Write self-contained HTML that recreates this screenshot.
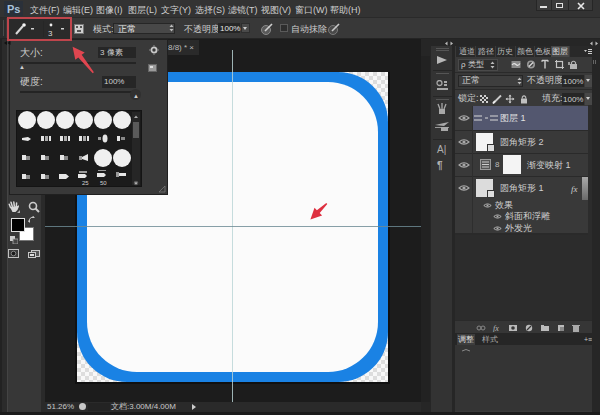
<!DOCTYPE html>
<html><head><meta charset="utf-8">
<style>
*{margin:0;padding:0;box-sizing:border-box}
html,body{width:600px;height:415px;overflow:hidden;background:#1c1c1c;font-family:"Liberation Sans",sans-serif;color:#d6d6d6;position:relative}
.a{position:absolute}
.t{position:absolute;font-size:9px;line-height:10px;white-space:nowrap;color:#cfcfcf}
.w{background:#f4f4f4}
.c{position:absolute;width:18px;height:18px;border-radius:50%;background:#f0f0f0}
.bi{position:absolute;background:#d8d8d8}
</style></head><body>
<!-- menu bar -->
<div class="a" style="left:0;top:0;width:600px;height:17px;background:#333333"></div>
<div class="a" style="left:536px;top:0;width:57px;height:11px;background:#3a3a3a;border:1px solid #262626;border-top:0"></div>
<div class="a" style="left:551px;top:0;width:1px;height:11px;background:#262626"></div>
<div class="a" style="left:568px;top:0;width:1px;height:11px;background:#262626"></div>
<div class="a" style="left:540px;top:6px;width:7px;height:2px;background:#e0e0e0"></div>
<div class="a" style="left:556px;top:3px;width:7px;height:5px;border:1.5px solid #e0e0e0"></div>
<svg class="a" style="left:577px;top:2px" width="8" height="8"><path d="M1 1 L7 7 M7 1 L1 7" stroke="#e8e8e8" stroke-width="1.6"/></svg>
<div class="a" style="left:0;top:17px;width:600px;height:1px;background:#2a2a2a"></div>
<div class="a" style="left:4px;top:1px;width:19px;height:15px;background:#2a3039"></div>
<div class="t" style="left:7px;top:3px;font-size:11px;line-height:12px;font-weight:bold;color:#a9c2dc">Ps</div>
<div class="t" style="left:30px;top:5px">文件(F)</div>
<div class="t" style="left:63px;top:5px">编辑(E)</div>
<div class="t" style="left:96px;top:5px">图像(I)</div>
<div class="t" style="left:128px;top:5px">图层(L)</div>
<div class="t" style="left:161px;top:5px">文字(Y)</div>
<div class="t" style="left:195px;top:5px">选择(S)</div>
<div class="t" style="left:228px;top:5px">滤镜(T)</div>
<div class="t" style="left:261px;top:5px">视图(V)</div>
<div class="t" style="left:295px;top:5px">窗口(W)</div>
<div class="t" style="left:330px;top:5px">帮助(H)</div>

<!-- options bar -->
<div class="a" style="left:0;top:18px;width:600px;height:20px;background:#383838"></div>
<div class="a" style="left:0;top:38px;width:600px;height:1px;background:#242424"></div>
<div class="a" style="left:0;top:18px;width:6px;height:20px;background:#2c2c2c"></div>
<div class="a" style="left:3px;top:20px;width:1px;height:16px;background:#4a4a4a"></div>
<!-- brush panel toggle -->
<svg class="a" style="left:74px;top:24px" width="10" height="10"><rect x="0.5" y="0.5" width="9" height="9" fill="#d0d0d0" stroke="#777"/><rect x="2" y="2" width="2" height="2" fill="#555"/><rect x="6" y="2" width="2" height="2" fill="#555"/><rect x="3" y="6" width="4" height="2" fill="#555"/></svg>
<div class="t" style="left:93px;top:24px">模式:</div>
<div class="a" style="left:113px;top:23px;width:62px;height:11px;background:#484848;border:1px solid #262626"></div>
<div class="t" style="left:118px;top:24px;color:#e8e8e8">正常</div>
<svg class="a" style="left:169px;top:24px" width="5" height="8"><path d="M0.5 3 L2.5 0.5 L4.5 3 Z M0.5 5 L2.5 7.5 L4.5 5 Z" fill="#bbb"/></svg>
<div class="t" style="left:184px;top:24px">不透明度:</div>
<div class="a" style="left:218px;top:23px;width:22px;height:10px;background:#262626"></div>
<div class="t" style="left:220px;top:24px;font-size:8px;color:#e6e6e6">100%</div>
<div class="a" style="left:241px;top:23px;width:9px;height:10px;background:#4a4a4a;border:1px solid #2e2e2e"></div>
<svg class="a" style="left:243px;top:27px" width="5" height="4"><path d="M0 0 L4 0 L2 3 Z" fill="#ccc"/></svg>
<svg class="a" style="left:260px;top:22px" width="14" height="14"><circle cx="6" cy="8" r="4.5" fill="#5a5a5a" stroke="#8a8a8a" stroke-width="1"/><line x1="5" y1="9" x2="12" y2="2" stroke="#d0d0d0" stroke-width="1.6"/></svg>
<div class="a" style="left:280px;top:24px;width:8px;height:8px;border:1px solid #5a5a5a;background:#2e2e2e"></div>
<div class="t" style="left:291px;top:24px">自动抹除</div>
<svg class="a" style="left:327px;top:22px" width="14" height="14"><circle cx="6" cy="8" r="4.5" fill="#4a4a4a" stroke="#7a7a7a" stroke-width="1"/><line x1="5" y1="9" x2="12" y2="2" stroke="#c8c8c8" stroke-width="1.6"/></svg>

<!-- canvas area -->
<div class="a" style="left:45px;top:39px;width:376px;height:363px;background:#1c1c1c"></div>
<div class="a" style="left:167px;top:40px;width:32px;height:15px;background:#2a2a2a"></div>
<div class="t" style="left:168px;top:43px;font-size:8px;color:#bbb">8/8) * ×</div>
<!-- image -->
<svg class="a" style="left:77px;top:72px" width="311" height="310">
<defs><pattern id="ck" width="8" height="8" patternUnits="userSpaceOnUse"><rect width="8" height="8" fill="#f8f8f8"/><rect width="4" height="4" fill="#dddddd"/><rect x="4" y="4" width="4" height="4" fill="#dddddd"/></pattern></defs>
<rect width="311" height="310" fill="url(#ck)"/>
<rect x="0" y="0" width="311" height="310" rx="50" fill="#1a82e4"/>
<rect x="10" y="10" width="291" height="290" rx="50" fill="#fbfbfb"/>
</svg>
<div class="a" style="left:388px;top:72px;width:2px;height:312px;background:#101010"></div>
<div class="a" style="left:75px;top:72px;width:2px;height:312px;background:#121212"></div>
<div class="a" style="left:75px;top:382px;width:315px;height:2px;background:#101010"></div>
<!-- guides -->
<div class="a" style="left:232px;top:50px;width:1px;height:352px;background:rgba(185,212,214,0.82)"></div>
<div class="a" style="left:45px;top:226px;width:376px;height:1px;background:rgba(108,138,148,0.82)"></div>
<!-- status bar -->
<div class="a" style="left:45px;top:402px;width:376px;height:10px;background:#2a2a2a"></div>
<div class="a" style="left:421px;top:402px;width:9px;height:10px;background:#2e2e2e"></div>
<div class="a" style="left:0;top:412px;width:600px;height:3px;background:#1b1b1b"></div>
<div class="t" style="left:47px;top:402px;font-size:8px;color:#c8c8c8">51.26%</div>
<div class="a" style="left:79px;top:403px;width:7px;height:7px;border-radius:50%;background:#c8c8c8"></div>
<div class="a" style="left:88px;top:403px;width:22px;height:8px;background:#232323"></div>
<div class="t" style="left:111px;top:402px;font-size:8px;color:#c8c8c8">文档:3.00M/4.00M</div>
<svg class="a" style="left:192px;top:404px" width="5" height="6"><path d="M0 0 L4 3 L0 6 Z" fill="#ccc"/></svg>

<!-- left toolbar -->
<div class="a" style="left:0;top:39px;width:45px;height:373px;background:#373737"></div>
<div class="a" style="left:0;top:39px;width:2px;height:373px;background:#222"></div>
<div class="a" style="left:2px;top:39px;width:5px;height:373px;background:#2b2b2b"></div>
<div class="a" style="left:7px;top:39px;width:1px;height:373px;background:#444"></div>
<div class="a" style="left:41px;top:39px;width:4px;height:373px;background:#2a2a2a"></div>
<!-- tools -->
<svg class="a" style="left:8px;top:201px" width="12" height="12"><path d="M2.5 6.5 L1.2 3.2 M4.3 5.5 L3 1.3 M6.3 5.2 L5.8 1 M8.3 5.5 L8.6 2" stroke="#d8d8d8" stroke-width="1.5" stroke-linecap="round"/><path d="M2 6 L9.5 5 L10.5 4 L11 5.5 L9.5 9 L7.5 11 L4.5 11 Z" fill="#d8d8d8"/></svg>
<svg class="a" style="left:17px;top:210px" width="4" height="4"><path d="M3 0 L3 3 L0 3Z" fill="#aaa"/></svg>
<svg class="a" style="left:28px;top:201px" width="12" height="12"><circle cx="5" cy="5" r="3.5" fill="none" stroke="#ccc" stroke-width="1.6"/><line x1="7.5" y1="7.5" x2="11" y2="11" stroke="#ccc" stroke-width="2"/></svg>
<div class="a" style="left:19px;top:227px;width:15px;height:14px;background:#fff;border:1px solid #777"></div>
<div class="a" style="left:11px;top:218px;width:14px;height:14px;background:#000;border:1px solid #ddd"></div>
<svg class="a" style="left:28px;top:216px" width="8" height="8"><path d="M1 6 Q1 1 6 1" fill="none" stroke="#ccc" stroke-width="1"/><path d="M0 5 L2 7 L2 4Z M5 0 L7 2 L4 2Z" fill="#ccc"/></svg>
<svg class="a" style="left:10px;top:236px" width="8" height="8"><rect x="0" y="0" width="5" height="5" fill="#ccc"/><rect x="3" y="3" width="5" height="5" fill="#444" stroke="#aaa" stroke-width="0.8"/></svg>
<svg class="a" style="left:8px;top:249px" width="32" height="11">
<rect x="0.5" y="0.5" width="10" height="8" fill="#3a3a3a" stroke="#c0c0c0"/><circle cx="5.5" cy="4.5" r="2.3" fill="#1a1a1a" stroke="#999" stroke-width="0.8"/>
<rect x="23.5" y="1.5" width="8" height="6" fill="#555" stroke="#c8c8c8"/><rect x="20.5" y="3.5" width="7" height="5" fill="#3a3a3a" stroke="#c8c8c8"/><rect x="22" y="5" width="4" height="2" fill="#ddd"/>
</svg>

<!-- brush popup -->
<div class="a" style="left:9px;top:39px;width:159px;height:156px;background:#393939;border:1px solid #202020"></div>
<div class="t" style="left:20px;top:48px;font-size:10px">大小:</div>
<div class="a" style="left:98px;top:47px;width:38px;height:11px;background:#262626"></div>
<div class="t" style="left:100px;top:48px;font-size:8px">3 像素</div>
<svg class="a" style="left:149px;top:45px" width="11" height="10"><circle cx="5" cy="5" r="2.6" fill="none" stroke="#c8c8c8" stroke-width="1.8"/><g fill="#888"><circle cx="5" cy="0.8" r="0.7"/><circle cx="5" cy="9.2" r="0.7"/><circle cx="9.2" cy="5" r="0.7"/><circle cx="0.8" cy="5" r="0.7"/></g></svg>
<div class="a" style="left:20px;top:62px;width:116px;height:2px;background:#242424"></div>
<div class="t" style="left:19px;top:64px;font-size:6px;line-height:6px">▲</div>
<svg class="a" style="left:148px;top:64px" width="9" height="8"><rect x="0.5" y="0.5" width="8" height="7" fill="#9a9a9a" stroke="#666"/><rect x="2" y="2" width="3" height="2" fill="#ddd"/></svg>
<div class="t" style="left:20px;top:77px;font-size:10px">硬度:</div>
<div class="a" style="left:102px;top:76px;width:34px;height:12px;background:#262626"></div>
<div class="t" style="left:104px;top:77px;font-size:8px">100%</div>
<div class="a" style="left:20px;top:91px;width:116px;height:2px;background:#242424"></div>
<div class="a" style="left:130px;top:89px;width:11px;height:11px;border-radius:50%;background:#303030"></div>
<div class="t" style="left:133px;top:93px;font-size:6px;line-height:6px">▲</div>
<!-- brush grid -->
<div class="a" style="left:16px;top:110px;width:126px;height:77px;background:#1b1b1b;border:1px solid #141414"></div>
<div class="c" style="left:18px;top:111px"></div>
<div class="c" style="left:37px;top:111px"></div>
<div class="c" style="left:56px;top:111px"></div>
<div class="c" style="left:75px;top:111px"></div>
<div class="c" style="left:94px;top:111px"></div>
<div class="c" style="left:113px;top:111px"></div>
<div class="c" style="left:94px;top:149px"></div>
<div class="c" style="left:113px;top:149px"></div>
<!-- small brush icons -->
<svg class="a" style="left:16px;top:130px" width="116" height="58">
<g fill="#e6e6e6">
<path d="M6 8 L12 7 L15 9 L12 11 L6 10 Z"/>
<rect x="25" y="6" width="3" height="5"/><rect x="29" y="6" width="3" height="5" fill="#aaa"/><rect x="33" y="6" width="2" height="5"/>
<rect x="44" y="6" width="3" height="5"/><rect x="48" y="6" width="3" height="5" fill="#aaa"/><rect x="52" y="6" width="2" height="5"/>
<rect x="63" y="6" width="3" height="5"/><rect x="67" y="6" width="3" height="5" fill="#aaa"/><rect x="71" y="6" width="2" height="5"/>
<rect x="82" y="7" width="3" height="3" fill="#999"/><ellipse cx="89" cy="8.5" rx="2.5" ry="4"/>
<rect x="101" y="6" width="3" height="5"/><rect x="105" y="7" width="4" height="3" fill="#888"/>
<rect x="6" y="25" width="4" height="5"/><rect x="10" y="26" width="4" height="4" fill="#888"/>
<rect x="25" y="25" width="4" height="5"/><rect x="29" y="26" width="4" height="4" fill="#888"/>
<rect x="44" y="25" width="4" height="5"/><rect x="48" y="26" width="4" height="4" fill="#888"/>
<rect x="63" y="26" width="3" height="4" fill="#999"/><path d="M66 27 L72 24 L72 31 L66 29 Z"/>
<rect x="6" y="44" width="4" height="5"/><rect x="10" y="45" width="4" height="4" fill="#888"/>
<rect x="25" y="44" width="4" height="5"/><rect x="29" y="45" width="4" height="4" fill="#888"/>
<path d="M43 44 L50 44 L53 46.5 L50 49 L43 49 Z"/>
<rect x="63" y="41" width="8" height="2" fill="#999"/><path d="M62 44 L69 44 L71 46 L69 48 L62 48 Z"/>
<rect x="82" y="40" width="8" height="1" fill="#999"/><path d="M81 43 L88 43 L90 45 L88 47 L81 47 Z"/>
<rect x="100" y="42" width="3" height="5" fill="#999"/><rect x="103" y="43" width="7" height="3"/>
</g>
</svg>
<div class="t" style="left:82px;top:180px;font-size:6px;line-height:6px">25</div>
<div class="t" style="left:100px;top:180px;font-size:6px;line-height:6px">50</div>
<!-- scrollbar -->
<div class="a" style="left:132px;top:112px;width:8px;height:73px;background:#262626"></div>
<div class="a" style="left:133px;top:122px;width:6px;height:16px;background:#5a5a5a"></div>
<svg class="a" style="left:133px;top:114px" width="6" height="72"><path d="M1 4 L3 1.5 L5 4 Z" fill="#aaa"/><circle cx="3" cy="69" r="2.3" fill="#555"/><path d="M1.5 68.5 L4.5 68.5 L3 70.5 Z" fill="#ccc"/></svg>
<svg class="a" style="left:159px;top:186px" width="7" height="7"><path d="M6 0 L6 6 L0 6 Z" fill="none" stroke="#777" stroke-width="0.8"/></svg>

<svg class="a" style="left:4px;top:41px" width="7" height="4"><path d="M0 2 L3 0 L3 4 Z M3.5 2 L6.5 0 L6.5 4 Z" fill="#111"/></svg>
<!-- red highlight box -->
<div class="a" style="left:9px;top:19px;width:61px;height:20px;background:#2a2a2a"></div>
<div class="a" style="left:7px;top:17px;width:65px;height:24px;border:2px solid #bf454c"></div>
<svg class="a" style="left:9px;top:19px" width="61" height="20">
<line x1="7" y1="15" x2="14" y2="7" stroke="#d8d8d8" stroke-width="2"/>
<circle cx="15" cy="6" r="1.8" fill="#f4f4f4"/>
<rect x="22" y="9" width="3" height="1.5" fill="#cfcfcf"/>
<rect x="34" y="2" width="1" height="16" fill="#262626"/>
<circle cx="42" cy="6" r="1.4" fill="#eee"/>
<text x="39" y="17" font-size="8" fill="#ddd" font-family="Liberation Sans">3</text>
<rect x="52" y="9" width="3" height="1.5" fill="#cfcfcf"/>
</svg>
<!-- arrows -->
<svg class="a" style="left:0;top:0" width="600" height="415">
<polygon points="72.6,46.7 84.7,52.4 81.7,54.7 93.9,72.3 92.7,73.3 78.3,57.5 75.3,59.8" fill="#e04650"/>
<polygon points="310.4,219.4 322.1,215.6 319.7,213.1 327.3,204.0 326.3,203.0 316.9,210.3 314.5,207.8" fill="#de3040"/>
</svg>
<!-- right panels -->
<div class="a" style="left:421px;top:39px;width:179px;height:373px;background:#262626"></div>
<div class="a" style="left:421px;top:56px;width:9px;height:346px;background:#222"></div>
<svg class="a" style="left:445px;top:41px" width="8" height="5"><path d="M0 2.5 L2.5 0.5 L2.5 4.5 Z M8 2.5 L5.5 0.5 L5.5 4.5 Z" fill="#bbb"/></svg>
<!-- icon column -->
<div class="a" style="left:431px;top:46px;width:21px;height:366px;background:#333333"></div>
<div class="a" style="left:436px;top:48px;width:13px;height:1px;background:#555"></div>
<div class="a" style="left:436px;top:50px;width:13px;height:1px;background:#555"></div>
<svg class="a" style="left:437px;top:56px" width="11" height="9"><polygon points="0,0 10,4 0,8" fill="#b8b8b8"/></svg>
<div class="a" style="left:433px;top:70px;width:19px;height:1px;background:#262626"></div>
<div class="a" style="left:436px;top:73px;width:13px;height:1px;background:#555"></div>
<svg class="a" style="left:436px;top:80px" width="14" height="11"><circle cx="3.5" cy="3" r="2.5" fill="none" stroke="#a8a8a8" stroke-width="1.3"/><rect x="8" y="1" width="3" height="2" fill="#a8a8a8"/><rect x="8" y="4" width="3" height="2" fill="#a8a8a8"/><rect x="1" y="8" width="11" height="2" fill="#a8a8a8"/></svg>
<div class="a" style="left:433px;top:96px;width:19px;height:1px;background:#262626"></div>
<div class="a" style="left:436px;top:99px;width:13px;height:1px;background:#555"></div>
<svg class="a" style="left:435px;top:103px" width="14" height="12"><path d="M3 1 L5 6 M7 0 L7 6 M11 1 L9 6" stroke="#a8a8a8" stroke-width="1.3"/><rect x="4" y="6" width="6" height="5" fill="#a8a8a8"/></svg>
<svg class="a" style="left:434px;top:120px" width="16" height="12"><path d="M1 5 L10 3 L15 2 L10 6 Z" fill="#a8a8a8"/><rect x="1" y="7" width="14" height="1" fill="#999"/><rect x="7" y="7" width="7" height="4" fill="#a8a8a8"/></svg>
<div class="a" style="left:433px;top:139px;width:19px;height:1px;background:#262626"></div>
<div class="t" style="left:437px;top:144px;font-size:10px;line-height:11px;color:#b0b0b0">A|</div>
<div class="t" style="left:437px;top:160px;font-size:10px;line-height:11px;font-weight:bold;color:#b0b0b0">¶</div>
<div class="a" style="left:452px;top:46px;width:3px;height:366px;background:#262626"></div>

<!-- layers panel -->
<div class="a" style="left:455px;top:46px;width:137px;height:366px;background:#393939"></div>
<div class="a" style="left:455px;top:46px;width:137px;height:11px;background:#3a3a3a"></div>
<div class="a" style="left:456px;top:46px;width:19px;height:11px;background:#292929"></div>
<div class="a" style="left:476px;top:46px;width:19px;height:11px;background:#292929"></div>
<div class="a" style="left:496px;top:46px;width:19px;height:11px;background:#292929"></div>
<div class="a" style="left:516px;top:46px;width:18px;height:11px;background:#292929"></div>
<div class="a" style="left:535px;top:46px;width:16px;height:11px;background:#292929"></div>
<div class="a" style="left:551px;top:46px;width:18px;height:11px;background:#474747"></div>
<div class="a" style="left:570px;top:46px;width:22px;height:11px;background:#292929"></div>
<div class="t" style="left:459px;top:47px;font-size:8px;color:#bbb">通道</div>
<div class="t" style="left:478px;top:47px;font-size:8px;color:#bbb">路径</div>
<div class="t" style="left:497px;top:47px;font-size:8px;color:#bbb">历史</div>
<div class="t" style="left:517px;top:47px;font-size:8px;color:#bbb">颜色</div>
<div class="t" style="left:535px;top:47px;font-size:8px;color:#bbb">色板</div>
<div class="t" style="left:552px;top:47px;font-size:8px;color:#ddd">图层</div>
<svg class="a" style="left:584px;top:48px" width="8" height="7"><path d="M0 2 L3 2 L1.5 4 Z" fill="#ccc"/><rect x="4" y="1" width="4" height="1" fill="#ccc"/><rect x="4" y="3" width="4" height="1" fill="#ccc"/><rect x="4" y="5" width="4" height="1" fill="#ccc"/></svg>
<!-- filter row -->
<div class="a" style="left:458px;top:59px;width:40px;height:12px;background:#2e2e2e;border:1px solid #4a4a4a"></div>
<div class="t" style="left:461px;top:60px;font-size:8px">ρ 类型</div>
<svg class="a" style="left:490px;top:61px" width="5" height="8"><path d="M0.5 3 L2.5 0.5 L4.5 3 Z M0.5 5 L2.5 7.5 L4.5 5 Z" fill="#bbb"/></svg>
<svg class="a" style="left:511px;top:59px" width="70" height="11">
<rect x="0.5" y="2" width="9" height="7" fill="#8a8a8a"/><path d="M1 6 Q3 3.5 5 5.5 T9 4.5" stroke="#e0e0e0" stroke-width="1.2" fill="none"/>
<circle cx="20" cy="5.5" r="4" fill="#999"/><circle cx="20" cy="5.5" r="2.4" fill="#444"/><path d="M18 7.5 L22 3.5" stroke="#ddd" stroke-width="1.3"/>
<path d="M31 1.5 L37 1.5 M34 1.5 L34 9.5" stroke="#ccc" stroke-width="1.4"/><path d="M31 1 L31 3 M37 1 L37 3" stroke="#ccc" stroke-width="1"/>
<rect x="45.5" y="2.5" width="6" height="6" fill="none" stroke="#c4c4c4" stroke-width="1.2"/><path d="M44 2.5 L45.5 2.5 M51.5 8.5 L53 8.5 M45.5 1 L45.5 2.5 M51.5 8.5 L51.5 10" stroke="#c4c4c4"/>
<rect x="59" y="5" width="7" height="5" fill="#b4b4b4"/><path d="M60.5 5 L60.5 3.5 Q62.5 1 64.5 3.5 L64.5 5" stroke="#b4b4b4" fill="none" stroke-width="1.2"/><rect x="57" y="3" width="2" height="3" fill="#999"/>
</svg>
<div class="a" style="left:455px;top:72px;width:137px;height:1px;background:#2a2a2a"></div>
<!-- blend row -->
<div class="a" style="left:458px;top:75px;width:65px;height:12px;background:#3e3e3e;border:1px solid #262626"></div>
<div class="t" style="left:462px;top:75px;font-size:9px">正常</div>
<svg class="a" style="left:517px;top:77px" width="5" height="8"><path d="M0.5 3 L2.5 0.5 L4.5 3 Z M0.5 5 L2.5 7.5 L4.5 5 Z" fill="#bbb"/></svg>
<div class="t" style="left:527px;top:75px;font-size:9px">不透明度:</div>
<div class="a" style="left:562px;top:75px;width:22px;height:12px;background:#262626"></div>
<div class="t" style="left:563px;top:77px;font-size:8px">100%</div>
<div class="a" style="left:585px;top:75px;width:7px;height:12px;background:#474747"></div>
<svg class="a" style="left:586px;top:79px" width="5" height="4"><path d="M0 0 L4 0 L2 3 Z" fill="#ccc"/></svg>
<div class="a" style="left:455px;top:89px;width:137px;height:1px;background:#2a2a2a"></div>
<!-- lock row -->
<div class="t" style="left:458px;top:93px;font-size:9px">锁定:</div>
<svg class="a" style="left:480px;top:94px" width="50" height="10">
<g fill="#d0d0d0"><rect x="0" y="1" width="2" height="2"/><rect x="4" y="1" width="2" height="2"/><rect x="2" y="3" width="2" height="2"/><rect x="6" y="3" width="2" height="2"/><rect x="0" y="5" width="2" height="2"/><rect x="4" y="5" width="2" height="2"/><rect x="2" y="7" width="2" height="2"/><rect x="6" y="7" width="2" height="2"/></g>
<path d="M14 8.5 L21 1.5" stroke="#ccc" stroke-width="1.8"/><path d="M13 9.5 L15 7" stroke="#eee" stroke-width="2"/>
<path d="M30 1 L30 9 M26 5 L34 5" stroke="#c8c8c8" stroke-width="1.2"/><path d="M28.5 2.5 L30 0.5 L31.5 2.5 Z M28.5 7.5 L30 9.5 L31.5 7.5 Z M27.5 3.5 L25.5 5 L27.5 6.5 Z M32.5 3.5 L34.5 5 L32.5 6.5Z" fill="#c8c8c8"/>
<rect x="41" y="4.5" width="6" height="5" fill="#c0c0c0"/><path d="M42.3 4.5 L42.3 3 Q44 0.8 45.7 3 L45.7 4.5" stroke="#c0c0c0" fill="none" stroke-width="1.1"/>
</svg>
<div class="t" style="left:542px;top:93px;font-size:9px">填充:</div>
<div class="a" style="left:562px;top:93px;width:22px;height:12px;background:#262626"></div>
<div class="t" style="left:563px;top:95px;font-size:8px">100%</div>
<div class="a" style="left:585px;top:93px;width:7px;height:12px;background:#474747"></div>
<svg class="a" style="left:586px;top:97px" width="5" height="4"><path d="M0 0 L4 0 L2 3 Z" fill="#ccc"/></svg>
<!-- layers list -->
<div class="a" style="left:455px;top:105px;width:133px;height:128px;background:#393939"></div>
<div class="a" style="left:472px;top:106px;width:116px;height:24px;background:#53576f"></div>
<div class="a" style="left:455px;top:130px;width:133px;height:1px;background:#2a2a2a"></div>
<div class="a" style="left:455px;top:153px;width:133px;height:1px;background:#2a2a2a"></div>
<div class="a" style="left:455px;top:176px;width:133px;height:1px;background:#2a2a2a"></div>
<div class="a" style="left:455px;top:233px;width:137px;height:2px;background:#2a2a2a"></div>
<div class="a" style="left:472px;top:106px;width:1px;height:127px;background:#2e2e2e"></div>
<!-- eyes -->
<svg class="a" style="left:458px;top:113px" width="12" height="10"><path d="M1 5 Q6 0.5 11 5 Q6 9.5 1 5 Z" fill="none" stroke="#a8a8a8" stroke-width="1.1"/><circle cx="6" cy="5" r="1.6" fill="#a8a8a8"/></svg>
<svg class="a" style="left:458px;top:137px" width="12" height="10"><path d="M1 5 Q6 0.5 11 5 Q6 9.5 1 5 Z" fill="none" stroke="#a8a8a8" stroke-width="1.1"/><circle cx="6" cy="5" r="1.6" fill="#a8a8a8"/></svg>
<svg class="a" style="left:458px;top:160px" width="12" height="10"><path d="M1 5 Q6 0.5 11 5 Q6 9.5 1 5 Z" fill="none" stroke="#a8a8a8" stroke-width="1.1"/><circle cx="6" cy="5" r="1.6" fill="#a8a8a8"/></svg>
<svg class="a" style="left:458px;top:183px" width="12" height="10"><path d="M1 5 Q6 0.5 11 5 Q6 9.5 1 5 Z" fill="none" stroke="#a8a8a8" stroke-width="1.1"/><circle cx="6" cy="5" r="1.6" fill="#a8a8a8"/></svg>
<!-- layer 1 -->
<svg class="a" style="left:473px;top:113px" width="26" height="10"><g stroke="#d8d8d8" stroke-width="1.2" fill="none"><path d="M1 3 L9 3 M1 7 L9 7 M12 5 L15 5 M17 3 L25 3 M17 7 L25 7"/></g></svg>
<div class="t" style="left:500px;top:113px;font-size:9px;color:#e0e0e0">图层 1</div>
<!-- layer 2 -->
<div class="a w" style="left:476px;top:133px;width:17px;height:18px"></div>
<div class="a" style="left:487px;top:144px;width:8px;height:8px;border:1px solid #333;background:#ddd"></div>
<div class="t" style="left:500px;top:137px;font-size:9px">圆角矩形 2</div>
<!-- layer 3 -->
<svg class="a" style="left:480px;top:159px" width="11" height="11"><rect x="0.5" y="0.5" width="10" height="10" fill="#555" stroke="#999"/><path d="M2 3 L9 3 M2 5.5 L9 5.5 M2 8 L9 8" stroke="#ccc" stroke-width="1"/></svg>
<div class="t" style="left:495px;top:160px;font-size:8px;color:#bbb">8</div>
<div class="a w" style="left:503px;top:155px;width:18px;height:19px"></div>
<div class="t" style="left:527px;top:160px;font-size:9px">渐变映射 1</div>
<!-- layer 4 -->
<div class="a" style="left:476px;top:179px;width:17px;height:18px;background:#dcdcdc"></div>
<div class="a" style="left:487px;top:190px;width:8px;height:8px;border:1px solid #333;background:#ddd"></div>
<div class="t" style="left:500px;top:183px;font-size:9px">圆角矩形 1</div>
<div class="t" style="left:571px;top:184px;font-size:9px;font-style:italic;font-family:'Liberation Serif',serif">fx</div>
<div class="a" style="left:582px;top:177px;width:8px;height:23px;background:linear-gradient(#a8a8a8,#6a6a6a)"></div>
<!-- effects -->
<svg class="a" style="left:483px;top:202px" width="9" height="7"><path d="M0.8 3.5 Q4.5 0.3 8.2 3.5 Q4.5 6.7 0.8 3.5 Z" fill="none" stroke="#b0b0b0" stroke-width="1"/><circle cx="4.5" cy="3.5" r="1" fill="#b0b0b0"/></svg>
<div class="t" style="left:495px;top:200px;font-size:9px">效果</div>
<svg class="a" style="left:493px;top:213px" width="9" height="7"><path d="M0.8 3.5 Q4.5 0.3 8.2 3.5 Q4.5 6.7 0.8 3.5 Z" fill="none" stroke="#b0b0b0" stroke-width="1"/><circle cx="4.5" cy="3.5" r="1" fill="#b0b0b0"/></svg>
<div class="t" style="left:505px;top:211px;font-size:9px">斜面和浮雕</div>
<svg class="a" style="left:493px;top:225px" width="9" height="7"><path d="M0.8 3.5 Q4.5 0.3 8.2 3.5 Q4.5 6.7 0.8 3.5 Z" fill="none" stroke="#b0b0b0" stroke-width="1"/><circle cx="4.5" cy="3.5" r="1" fill="#b0b0b0"/></svg>
<div class="t" style="left:505px;top:223px;font-size:9px">外发光</div>
<!-- empty region -->
<div class="a" style="left:455px;top:235px;width:133px;height:85px;background:#2c2c2c"></div>
<div class="a" style="left:588px;top:105px;width:4px;height:218px;background:#2c2c2c"></div>
<!-- bottom toolbar -->
<div class="a" style="left:455px;top:320px;width:137px;height:13px;background:#363636;border-top:1px solid #2a2a2a"></div>
<svg class="a" style="left:475px;top:324px" width="110" height="8">
<path d="M2 4 a2 2 0 0 1 4 0 M6 4 a2 2 0 0 0 4 0 M6 4 a2 2 0 0 1 4 0 M2 4 a2 2 0 0 0 4 0" stroke="#888" fill="none" stroke-width="1"/>
<text x="18" y="7" font-size="8" font-style="italic" fill="#bbb" font-family="Liberation Serif">fx</text>
<rect x="34" y="1" width="8" height="6" fill="#bbb"/><circle cx="38" cy="4" r="1.8" fill="#363636"/>
<circle cx="54" cy="4" r="3.2" fill="#bbb"/><path d="M52 6 L56 2" stroke="#363636" stroke-width="1.2"/>
<rect x="66" y="2" width="8" height="5" fill="#bbb"/><rect x="66" y="1" width="3" height="2" fill="#bbb"/>
<rect x="83" y="1" width="6" height="6" fill="#bbb"/><rect x="85" y="3" width="4" height="4" fill="#888"/>
<rect x="98" y="2" width="6" height="6" fill="#aaa"/><rect x="97" y="1" width="8" height="1" fill="#aaa"/>
</svg>
<!-- adjustments -->
<div class="a" style="left:455px;top:333px;width:137px;height:12px;background:#262626"></div>
<div class="a" style="left:457px;top:334px;width:18px;height:11px;background:#3d3d3d"></div>
<div class="t" style="left:458px;top:335px;font-size:8px;color:#ddd">调整</div>
<div class="t" style="left:482px;top:335px;font-size:8px;color:#aaa">样式</div>
<div class="t" style="left:584px;top:335px;font-size:7px;color:#ccc">+≡</div>
<div class="a" style="left:455px;top:345px;width:137px;height:66px;background:#343434"></div>
<svg class="a" style="left:462px;top:348px" width="8" height="4"><path d="M0 3 Q4 0 8 3" stroke="#888" fill="none"/></svg>
<div class="a" style="left:592px;top:39px;width:8px;height:373px;background:#262626"></div>
<svg class="a" style="left:590px;top:41px" width="8" height="5"><path d="M0 2.5 L2.5 0.5 L2.5 4.5 Z M8 2.5 L5.5 0.5 L5.5 4.5 Z" fill="#bbb"/></svg>
<div class="a" style="left:593px;top:60px;width:1px;height:4px;background:#666"></div>
<div class="a" style="left:595px;top:60px;width:1px;height:4px;background:#666"></div>
</body></html>
